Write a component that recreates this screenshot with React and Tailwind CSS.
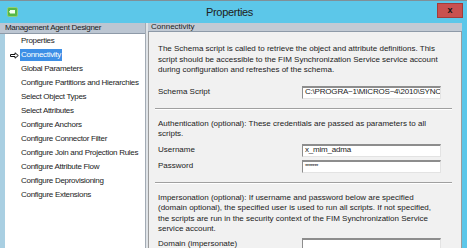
import React from "react";

const menu = [
  "Properties",
  "Connectivity",
  "Global Parameters",
  "Configure Partitions and Hierarchies",
  "Select Object Types",
  "Select Attributes",
  "Configure Anchors",
  "Configure Connector Filter",
  "Configure Join and Projection Rules",
  "Configure Attribute Flow",
  "Configure Deprovisioning",
  "Configure Extensions",
];

const Arrow = () => (
  <svg width="9" height="7" viewBox="0 0 9 7" className="absolute left-[5px] top-[4px]">
    <path d="M0.5 2.5 H5 V0.8 L8.3 3.5 L5 6.2 V4.5 H0.5 Z" fill="white" stroke="#111" strokeWidth="1" />
  </svg>
);

const Field = ({ value, small }) => (
  <div className="w-[139px] h-[13px] bg-white border-t-2 border-l border-t-[#8d8d8d] border-l-[#8d8d8d] border-r border-b border-r-[#e3e3e3] border-b-[#e3e3e3] overflow-hidden whitespace-nowrap flex items-center pl-[2px]">
    <span className={small ? "text-[6px] tracking-[-0.5px]" : "tracking-[-0.2px]"}>{value}</span>
  </div>
);

const Row = ({ label, value, small, className = "" }) => (
  <div className={`flex items-center pl-[3px] ${className}`}>
    <span className="w-[144px]">{label}</span>
    <Field value={value} small={small} />
  </div>
);

const Rule = ({ className = "" }) => (
  <div className={`mr-[3px] border-t border-t-[#a0a0a0] border-b border-b-white ${className}`} />
);

export default function App() {
  return (
    <div className="w-[467px] h-[248px] overflow-hidden bg-[#5cc7e9] border-t border-t-[#7f9099] font-['Liberation_Sans',Arial,sans-serif] text-[8px] text-[#1b1b1b] leading-[10.5px]">
      {/* title bar */}
      <div className="relative h-[22px] flex items-center">
        <svg width="11" height="10" viewBox="0 0 11 10" className="ml-[7px]">
          <rect x="0.5" y="0.5" width="10" height="9" rx="1.5" fill="#57b846" stroke="#8fd07a" />
          <rect x="3" y="3" width="5" height="3.5" fill="#f4fff0" />
          <rect x="2.2" y="4" width="1.2" height="1.5" fill="#f4fff0" />
        </svg>
        <span className="flex-1 text-center text-[11px] tracking-[-0.3px] text-[#202020] pl-[4px]">Properties</span>
        <div className="w-[26px] h-[15px] mr-[4px] mb-[4px] bg-[#c9514f] border border-[#a33c3a] flex items-center justify-center text-[9px] font-bold text-[#151515]">
          x
        </div>
      </div>

      <div className="flex h-[225px]">
        {/* left column */}
        <div className="w-[145px] flex flex-col tracking-[-0.3px]">
          <div className="h-[11px] bg-[#bcc6d2] border-b border-b-[#8e9aa8] pl-[5px] flex items-center leading-none">
            Management Agent Designer
          </div>
          <div className="flex flex-1">
            <div className="w-[5px] bg-[#a9cfe2]" />
            <ul className="flex-1 bg-white">
              {menu.map((item, i) => (
                <li key={item} className="relative h-[14px] pl-[15px] flex items-center">
                  {i === 1 && <Arrow />}
                  <span className={i === 1 ? "bg-[#3d8fe6] text-white px-[1px] leading-[12px]" : "px-[1px]"}>{item}</span>
                </li>
              ))}
            </ul>
          </div>
        </div>

        {/* splitter */}
        <div className="w-[3px] bg-[#dfe3e7] border-l border-l-[#a3abb4]" />

        {/* right column */}
        <div className="w-[314px] flex flex-col">
          <div className="h-[11px] bg-[#c2cad4] border-b border-b-[#8e9aa8] pl-[3px] flex items-center leading-none">
            Connectivity
          </div>
          <div className="flex-1 bg-[#f1f1f1] border-l border-r border-[#9b9b9b] px-[6px] pt-[12px]">
            <p className="pl-[3px] w-[284px]">
              The Schema script is called to retrieve the object and attribute definitions. This script should be accessible to the FIM Synchronization Service service account during configuration and refreshes of the schema.
            </p>
            <Row label="Schema Script" value="C:\PROGRA~1\MICROS~4\2010\SYNC" className="mt-[10px]" />
            <Rule className="mt-[9px]" />
            <p className="pl-[3px] mt-[9px] w-[284px]">
              Authentication (optional): These credentials are passed as parameters to all scripts.
            </p>
            <Row label="Username" value="x_mim_adma" className="mt-[4px]" />
            <Row label="Password" value="*******" small className="mt-[3px]" />
            <Rule className="mt-[9px]" />
            <p className="pl-[3px] mt-[9px] w-[284px]">
              Impersonation (optional): If username and password below are specified (domain optional), the specified user is used to run all scripts. If not specified, the scripts are run in the security context of the FIM Synchronization Service service account.
            </p>
            <Row label="Domain (impersonate)" value="" className="mt-[3px]" />
          </div>
        </div>

        <div className="flex-1" />
      </div>
    </div>
  );
}
